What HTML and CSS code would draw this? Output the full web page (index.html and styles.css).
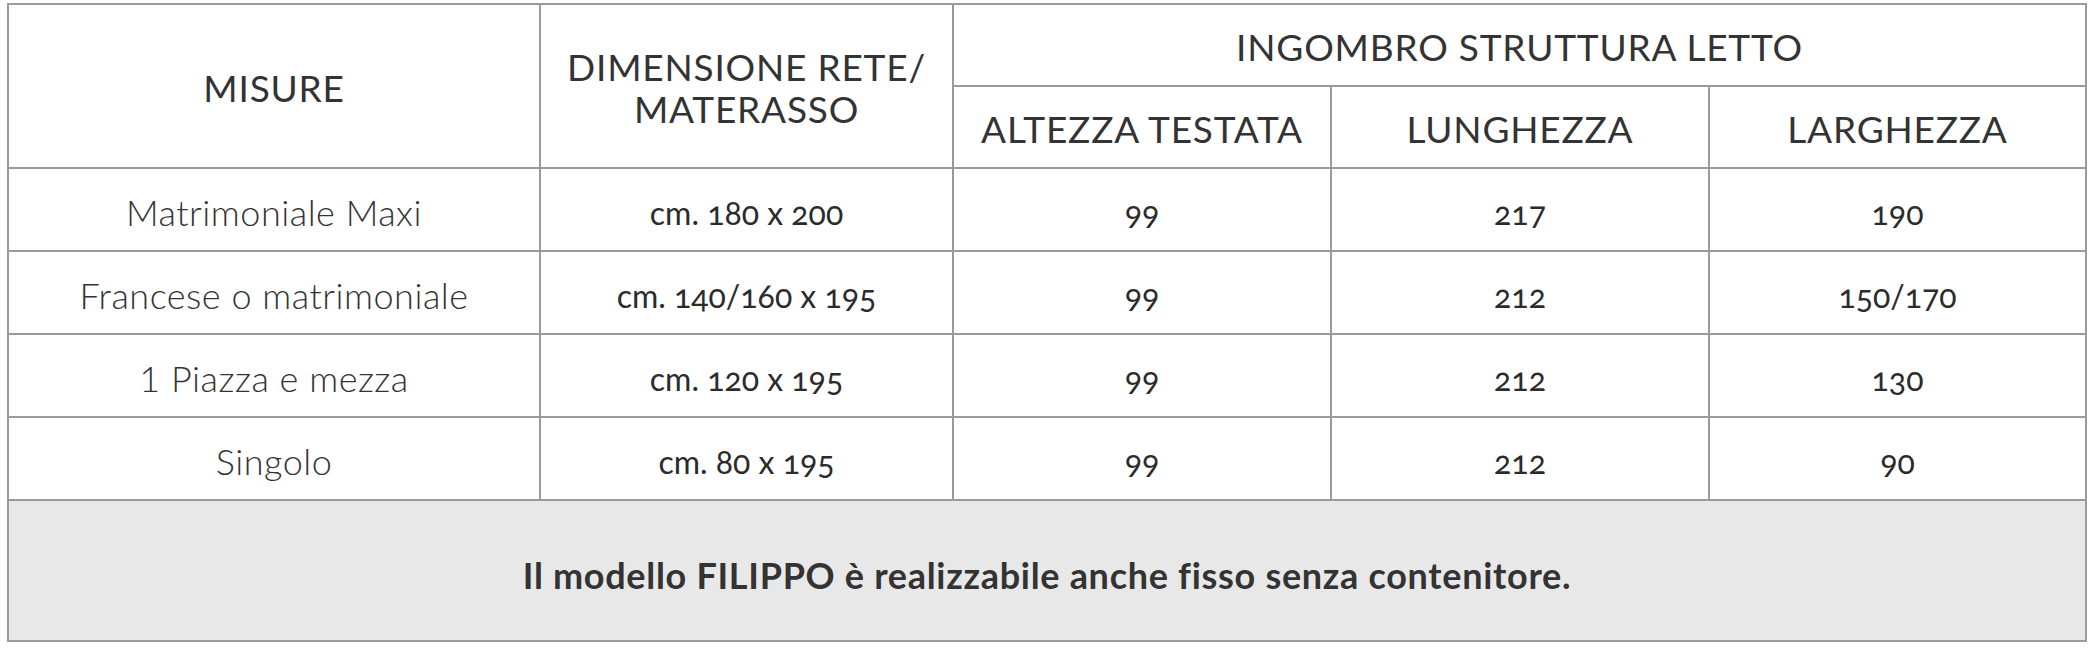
FILE: index.html
```html
<!DOCTYPE html>
<html lang="it">
<head>
<meta charset="utf-8">
<title>Misure FILIPPO</title>
<link rel="stylesheet" href="styles.css">
</head>
<body>
<table class="sizes">
  <colgroup>
    <col class="c-misure">
    <col class="c-dim">
    <col class="c-alt">
    <col class="c-lun">
    <col class="c-lar">
  </colgroup>
  <thead>
    <tr class="head-row">
      <th rowspan="2">MISURE</th>
      <th rowspan="2">DIMENSIONE RETE/<br>MATERASSO</th>
      <th colspan="3">INGOMBRO STRUTTURA LETTO</th>
    </tr>
    <tr class="head-row">
      <th>ALTEZZA TESTATA</th>
      <th>LUNGHEZZA</th>
      <th>LARGHEZZA</th>
    </tr>
  </thead>
  <tbody>
    <tr class="body-row">
      <td class="name">Matrimoniale Maxi</td>
      <td class="val">cm. 180 x 200</td>
      <td class="val">99</td>
      <td class="val">217</td>
      <td class="val">190</td>
    </tr>
    <tr class="body-row">
      <td class="name">Francese o matrimoniale</td>
      <td class="val">cm. 140/160 x 195</td>
      <td class="val">99</td>
      <td class="val">212</td>
      <td class="val">150/170</td>
    </tr>
    <tr class="body-row">
      <td class="name">1 Piazza e mezza</td>
      <td class="val">cm. 120 x 195</td>
      <td class="val">99</td>
      <td class="val">212</td>
      <td class="val">130</td>
    </tr>
    <tr class="body-row">
      <td class="name">Singolo</td>
      <td class="val">cm. 80 x 195</td>
      <td class="val">99</td>
      <td class="val">212</td>
      <td class="val">90</td>
    </tr>
    <tr class="note-row">
      <td colspan="5">Il modello FILIPPO è realizzabile anche fisso senza contenitore.</td>
    </tr>
  </tbody>
</table>
</body>
</html>
```
FILE: styles.css
```css
html, body {
  background: #ffffff;
}
body {
  margin: 3px 8px 0 7px;
  font-family: "Lato", "Open Sans", sans-serif;
  color: #333333;
}
.sizes {
  width: 2080px;
  table-layout: fixed;
  border-collapse: collapse;
  border: 2px solid #9a9a9a;
}
.c-misure { width: 532px; }
.c-dim { width: 413px; }
.c-alt { width: 378px; }
.c-lun { width: 378px; }
.c-lar { width: 377px; }
.sizes th,
.sizes td {
  border: 2px solid #9a9a9a;
  text-align: center;
  vertical-align: middle;
  padding: 0 6px;
}
.sizes th {
  font-weight: 400;
  font-size: 37px;
  letter-spacing: 0.8px;
  line-height: 42px;
  padding-top: 4px;
}
.head-row {
  height: 82px;
}
.body-row {
  height: 83px;
}
.body-row td {
  padding-top: 5px;
}
.name {
  font-weight: 300;
  font-size: 36px;
  letter-spacing: 0.5px;
}
.val {
  font-weight: 400;
  font-size: 32px;
  font-variant-numeric: oldstyle-nums;
  color: #2b2b2b;
}
.note-row {
  height: 141px;
}
.note-row td {
  background: #e8e8e8;
  font-weight: 700;
  font-size: 36px;
  letter-spacing: 0.7px;
  padding-top: 8px;
}
```
